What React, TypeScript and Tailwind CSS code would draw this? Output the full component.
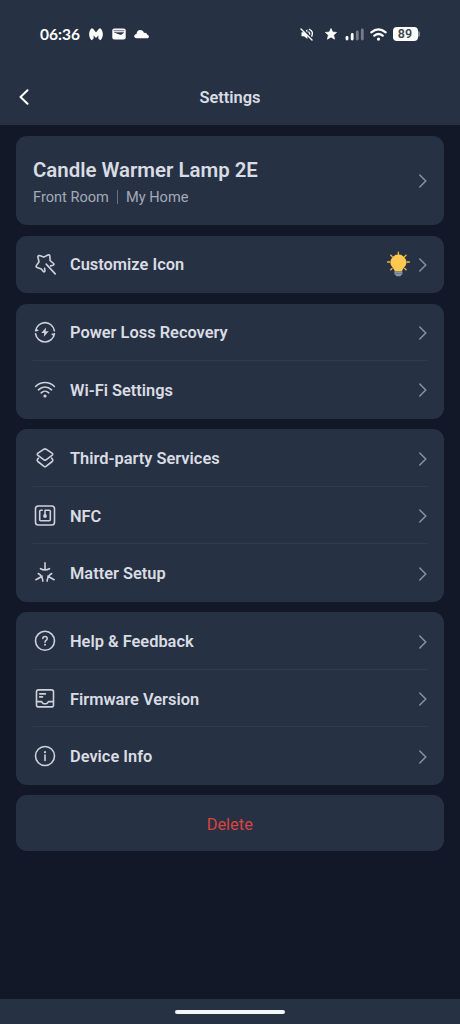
import type { ReactNode } from "react";

const Svg = ({ children }: { children: ReactNode }) => (
  <svg
    width="24"
    height="24"
    viewBox="0 0 24 24"
    fill="none"
    stroke="#cdd1d9"
    strokeWidth="1.6"
    strokeLinecap="round"
    strokeLinejoin="round"
    className="shrink-0"
  >
    {children}
  </svg>
);

const Chevron = () => (
  <svg width="8" height="14" viewBox="0 0 8 14" fill="none" stroke="#8a92a0" strokeWidth="1.5" strokeLinecap="round" strokeLinejoin="round" className="mt-px shrink-0">
    <path d="M.8 1L6.8 7L.8 13" />
  </svg>
);

const WandIcon = () => (
  <Svg>
    <path d="M11.6 16.2L11.9 18.8Q11.6 20.6 10.3 19.5L8.3 17L4.1 15.6Q2.6 14.8 3.4 13.6L6 9.8L4.9 5Q4.7 3.2 6.5 3.6L10.7 5.1L15 3Q16.8 2.4 16.9 4.3L17.1 8.7L20.6 11.5Q21.5 12.8 20 13.3L17.6 13.9M13.2 12.1L22.2 21.9" strokeWidth="1.6" />
  </Svg>
);

const PowerIcon = () => (
  <Svg>
    <path d="M2.6 10.8A9.5 9.5 0 0 1 21.4 10.8M21.4 13.8A9.5 9.5 0 0 1 2.6 13.8M2.8 10.6L4.7 10.2M21.2 14L19.3 14.4" />
    <path d="M13 7.6L8.2 13.1H11.2L10.8 16.8L15.8 11.3H12.7Z" fill="#cdd1d9" stroke="none" />
  </Svg>
);

const WifiIcon = () => (
  <Svg>
    <path d="M2.6 8.5C8 3.2 16 3.2 21.4 8.5M5.4 11.8C9.3 8.1 14.7 8.1 18.6 11.8M8.2 14.8C10.4 12.7 13.6 12.7 15.8 14.8" />
    <circle cx="12" cy="18" r="1.6" fill="#cdd1d9" stroke="none" />
  </Svg>
);

const LayersIcon = () => (
  <Svg>
    <path d="M11 3.2Q12 2.6 13 3.2L19 7.2Q20.4 8.3 19 9.4L13 13.8Q12 14.5 11 13.8L5 9.4Q3.6 8.3 5 7.2Z" />
    <path d="M5.4 12.2L4.5 13.3Q3.6 14.5 4.8 15.5L11 20.4Q12 21.1 13 20.4L19.2 15.5Q20.4 14.5 19.5 13.3L18.6 12.2" />
  </Svg>
);

const NfcIcon = () => (
  <Svg>
    <rect x="2.5" y="2" width="19" height="19" rx="2.8" />
    <path d="M9.2 6.3H7.7Q6.7 6.3 6.7 7.3V15.7Q6.7 16.7 7.7 16.7H16.3Q17.3 16.7 17.3 15.7V7.3Q17.3 6.3 16.3 6.3H12V11.5" />
    <circle cx="12" cy="12" r="1.9" fill="#cdd1d9" stroke="none" />
  </Svg>
);

const MatterIcon = () => (
  <Svg>
    <path d="M12 1.9V8.8M7.5 7.7Q12 10.2 16.5 7.7M2.9 18.7L9.1 15.2M5.3 12.5Q9.6 15.1 9.9 20.1M21.1 18.7L14.9 15.2M18.7 12.5Q14.4 15.1 14.1 20.1" />
  </Svg>
);

const HelpIcon = () => (
  <Svg>
    <circle cx="12" cy="11.8" r="9.5" />
    <path d="M9.8 9.6Q9.8 7.5 12 7.5Q14.2 7.5 14.2 9.4Q14.2 10.6 13.1 11.3Q12 12 12 13.2" strokeWidth="1.5" />
    <circle cx="12" cy="15.8" r="1" fill="#cdd1d9" stroke="none" />
  </Svg>
);

const FirmwareIcon = () => (
  <Svg>
    <rect x="3.5" y="2.9" width="17" height="17" rx="2" />
    <path d="M6.7 6.9H12.4M6.7 9.9H9.5M3.6 14.6H8.4L9.6 16Q10.1 16.7 11 16.7H13Q13.9 16.7 14.4 16L15.6 14.6H20.4" />
  </Svg>
);

const InfoIcon = () => (
  <Svg>
    <circle cx="12" cy="12" r="9.5" />
    <path d="M12 11V16.5" />
    <circle cx="12" cy="8.2" r="1.1" fill="#cdd1d9" stroke="none" />
  </Svg>
);

const Bulb = () => (
  <svg width="24" height="26" viewBox="0 0 24 26" fill="none" className="mr-[8px] shrink-0">
    <g transform="translate(-.6 .3)">
      <path d="M12 1V3.2M4.4 4L5.9 5.5M19.6 4L18.1 5.5M1 10.7H3.4M20.6 10.7H23M4.3 18.5L5.7 17.1M19.7 18.5L18.3 17.1" stroke="#e9b44d" strokeWidth="1.4" strokeLinecap="round" />
      <path d="M12 3.3A8 8 0 0 0 4 11.3C4 15.5 8 17 8.3 20.3H15.7C16 17 20 15.5 20 11.3A8 8 0 0 0 12 3.3Z" fill="#ffc850" />
      <path d="M8 20.3H16V22.8Q16 23.6 14.8 23.8L14 25H10L9.2 23.8Q8 23.6 8 22.8Z" fill="#8796a5" />
      <path d="M8 22.2H16" stroke="#65727f" strokeWidth=".7" />
    </g>
  </svg>
);

const Row = ({ icon, label, extra, line }: { icon: ReactNode; label: string; extra?: ReactNode; line?: boolean }) => (
  <div className="relative flex h-[57.5px] items-center pl-[17px] pr-[17px]">
    {icon}
    <span className="ml-[13px] flex-1 pt-[2px] text-[16.4px] font-semibold leading-6 text-[#d9dce2]">{label}</span>
    {extra}
    <Chevron />
    {line && <div className="absolute bottom-0 left-[17px] right-[16px] h-px bg-[#303b4c]" />}
  </div>
);

const Card = ({ children }: { children: ReactNode }) => (
  <section className="rounded-[11px] bg-[#273144]">{children}</section>
);

const StatusBar = () => (
  <div className="flex h-[68px] items-center pl-[40px] pr-[40px] text-white">
    <span className="w-[41px] whitespace-nowrap font-['Lato'] text-[15.5px] font-bold leading-5">06:36</span>
    <svg width="14" height="13" viewBox="0 0 14 13" className="ml-[8px]" fill="#fff">
      <path d="M2.4 .6H3.9L7 4.4L10.1 .6H11.6C13.2 2.2 14 4.5 13.8 7C13.6 9.2 12.8 11 11.4 12.3L9.4 10.8V7.4L7 10L4.6 7.4V10.8L2.6 12.3C1.2 11 .4 9.2 .2 7C0 4.5 .8 2.2 2.4 .6Z" />
    </svg>
    <svg width="14" height="12" viewBox="0 0 14 12" className="ml-[9px]">
      <rect x=".3" y=".5" width="13.4" height="11" rx="2" fill="#fff" />
      <path d="M1.5 2.4H12.5M2 4.2H12" stroke="#5d6674" strokeWidth=".8" />
      <path d="M2 4.6L8 6.8Q9 7 9.8 6.4L12 4.6" fill="#273144" />
    </svg>
    <svg width="15" height="10" viewBox="0 0 15 10" className="ml-[8px]" fill="#fff">
      <path d="M2.8 9.2C.8 9.2.1 8.2.2 7.1C.4 6 1.3 5.2 2.5 5C2.9 2.5 4.1 1 6.1 1C8 1 9.3 2 9.9 3.7C11.9 3.4 13 4.4 13.2 5.8C14.4 6.1 15 6.8 14.8 7.7C14.7 8.7 14 9.2 12.9 9.2Z" />
    </svg>
    <div className="flex-1" />
    <svg width="14" height="14" viewBox="0 0 14 14" fill="none" stroke="#fff" strokeWidth="1.4" strokeLinecap="round" className="mr-[.5px]">
      <path d="M1.5 5.2H4L7.4 2.2V11.9L4 9.2H1.5Z" fill="#fff" stroke="none" />
      <path d="M8.8 4.9Q10.4 6.7 9.2 8.7M9.4 2.4Q14 4.6 11.6 9.6" />
      <path d="M2.2 1.4L13 12.4" stroke="#273144" strokeWidth="1.6" />
      <path d="M1 1.9L12 12.9" />
    </svg>
    <svg width="12" height="12" viewBox="0 0 12 12" fill="#fff" stroke="#fff" strokeWidth=".7" strokeLinejoin="round" className="ml-[10px]">
      <path d="M6 .5L7.6 4.1L11.6 4.4L8.6 7.1L9.6 11.2L6 9L2.4 11.2L3.4 7.1L.4 4.4L4.4 4.1Z" />
    </svg>
    <svg width="19" height="13" viewBox="0 0 19 13" fill="none" strokeWidth="2.8" strokeLinecap="round" className="ml-[8px]">
      <path d="M2 9.3V11M7.2 6.3V11" stroke="#fff" />
      <path d="M12.3 4V11M17.3 2V11" stroke="#747c89" />
    </svg>
    <svg width="17" height="13" viewBox="0 0 17 13" fill="none" stroke="#fff" strokeWidth="2.2" strokeLinecap="round" className="ml-[6px]">
      <path d="M1.3 4.4Q8.5-1.7 15.7 4.4M4.3 7.7Q8.5 4.3 12.7 7.7" />
      <circle cx="8.5" cy="11.1" r="1.6" fill="#fff" stroke="none" />
    </svg>
    <div className="ml-[6px] flex h-[14px] w-[25px] items-center justify-center rounded-[4px] bg-white text-[12.5px] font-semibold leading-[14px] text-[#3c4350]">89</div>
    <div className="h-[6px] w-[2.5px] rounded-r-sm bg-[#7b8490]" />
  </div>
);

export default function App() {
  return (
    <div className="flex h-[1024px] w-[460px] flex-col overflow-hidden bg-[#121827] font-['Roboto',sans-serif]">
      <header className="h-[125px] shrink-0 bg-[#273144]">
        <StatusBar />
        <div className="grid h-[57px] grid-cols-[60px_1fr_60px] items-center">
          <svg width="10" height="16" viewBox="0 0 10 16" fill="none" stroke="#fff" strokeWidth="2" strokeLinecap="round" strokeLinejoin="round" className="ml-[19px]">
            <path d="M8.5 1.2L1.5 8L8.5 14.8" />
          </svg>
          <h1 className="pt-[2px] text-center text-[16.4px] font-semibold leading-6 text-[#d9dce2]">Settings</h1>
        </div>
      </header>
      <main className="flex flex-1 flex-col gap-[10.6px] pl-[16px] pr-[16.5px] pt-[10.8px]">
        <Card>
          <div className="flex h-[89.2px] items-center pl-[17px] pr-[17px]">
            <div className="flex-1 pt-[6px]">
              <h2 className="text-[20.4px] font-semibold leading-[28px] text-[#d9dce2]">Candle Warmer Lamp 2E</h2>
              <div className="flex items-center text-[14.6px] leading-[27px] text-[#a4abb8]">
                <span>Front Room</span>
                <span className="mx-[8px] h-[14px] w-px bg-[#697383]" />
                <span>My Home</span>
              </div>
            </div>
            <Chevron />
          </div>
        </Card>
        <Card>
          <Row icon={<WandIcon />} label="Customize Icon" extra={<Bulb />} />
        </Card>
        <Card>
          <Row icon={<PowerIcon />} label="Power Loss Recovery" line />
          <Row icon={<WifiIcon />} label="Wi-Fi Settings" />
        </Card>
        <Card>
          <Row icon={<LayersIcon />} label="Third-party Services" line />
          <Row icon={<NfcIcon />} label="NFC" line />
          <Row icon={<MatterIcon />} label="Matter Setup" />
        </Card>
        <Card>
          <Row icon={<HelpIcon />} label="Help & Feedback" line />
          <Row icon={<FirmwareIcon />} label="Firmware Version" line />
          <Row icon={<InfoIcon />} label="Device Info" />
        </Card>
        <Card>
          <button className="flex h-[56px] w-full items-center justify-center pt-[3px] text-[16.4px] text-[#d9443f]">Delete</button>
        </Card>
      </main>
      <footer className="flex h-[25px] shrink-0 justify-center bg-[#273144] pt-[11px]">
        <div className="h-[4px] w-[110px] rounded-full bg-[#f4f5f7]" />
      </footer>
    </div>
  );
}
